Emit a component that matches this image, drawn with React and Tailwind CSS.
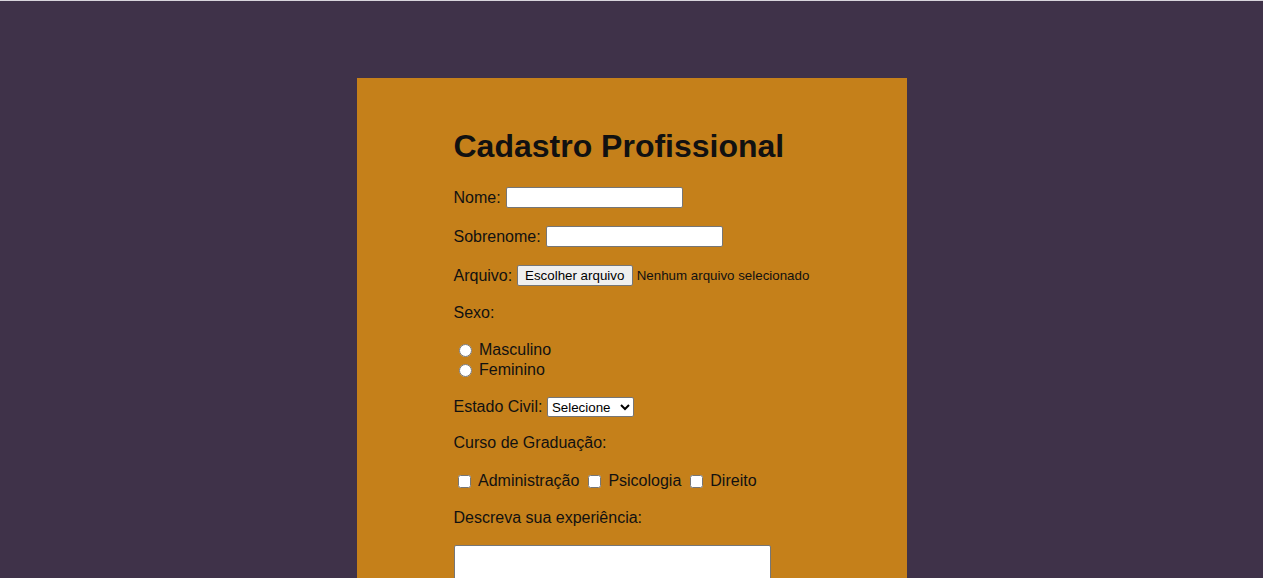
export default function App() {
  return (
    <div className="min-h-[578px] bg-[#3f3249] text-[#111] font-['Liberation_Sans',Arial,sans-serif] text-[16px]">
      <div className="h-[1px] bg-[#d8d5dc]" />
      <div className="mx-auto mt-[77px] w-[550px] bg-[#c5801a] pl-[97px] pt-[50px] pb-[40px]">
        <h1 className="h-[37px] text-[32px] font-bold leading-[37px]">Cadastro Profissional</h1>

        {/* nome */}
        <div className="mt-[22px] flex h-[21px] items-center">
          <label htmlFor="nome">Nome:</label>
          <input id="nome" type="text" className="ml-[5.5px] h-[21px] w-[177px] rounded-[2px] border border-[#767676] bg-white px-[2px] text-[13.33px]" />
        </div>

        <div className="mt-[18px] flex h-[21px] items-center">
          <label htmlFor="sobrenome">Sobrenome:</label>
          <input id="sobrenome" type="text" className="ml-[5.5px] h-[21px] w-[177px] rounded-[2px] border border-[#767676] bg-white px-[2px] text-[13.33px]" />
        </div>

        <div className="mt-[18px] flex h-[21px] items-center">
          <span>Arquivo:</span>
          <button type="button" className="ml-[4.5px] h-[21px] w-[116px] rounded-[2px] border border-[#767676] bg-[#efefef] text-[13.33px] leading-none text-black">
            Escolher arquivo
          </button>
          <span className="ml-[4px] text-[13.33px]">Nenhum arquivo selecionado</span>
        </div>

        <div className="mt-[18px] h-[18px] leading-[18px]">Sexo:</div>

        {/* sexo */}
        <div className="mt-[18px]">
          <label className="flex h-[20px] items-center">
            <input type="radio" name="sexo" className="ml-[5px] h-[13px] w-[13px]" />
            <span className="ml-[7.5px]">Masculino</span>
          </label>
          <label className="flex h-[20px] items-center">
            <input type="radio" name="sexo" className="ml-[5px] h-[13px] w-[13px]" />
            <span className="ml-[7.5px]">Feminino</span>
          </label>
        </div>

        <div className="mt-[17px] flex h-[20px] items-center">
          <label htmlFor="estado">Estado Civil:</label>
          <select id="estado" className="ml-[4.5px] h-[20px] w-[87px] rounded-[2px] border border-[#767676] bg-white text-[13.33px] text-black">
            <option>Selecione</option>
            <option>Solteiro</option>
            <option>Casado</option>
          </select>
        </div>

        <div className="mt-[17px] h-[18px] leading-[18px]">Curso de Graduação:</div>

        <div className="mt-[19px] flex h-[20px] items-center">
          <input type="checkbox" className="ml-[4px] h-[13px] w-[13px]" />
          <span className="ml-[7.5px]">Administração</span>
          <input type="checkbox" className="ml-[8.5px] h-[13px] w-[13px]" />
          <span className="ml-[7.5px]">Psicologia</span>
          <input type="checkbox" className="ml-[8.5px] h-[13px] w-[13px]" />
          <span className="ml-[7.5px]">Direito</span>
        </div>

        <div className="mt-[18px] h-[18px] leading-[18px]">Descreva sua experiência:</div>

        <textarea className="mt-[18px] block h-[48px] w-[317px] rounded-[2px] border border-[#767676] bg-white" />
      </div>
    </div>
  );
}
